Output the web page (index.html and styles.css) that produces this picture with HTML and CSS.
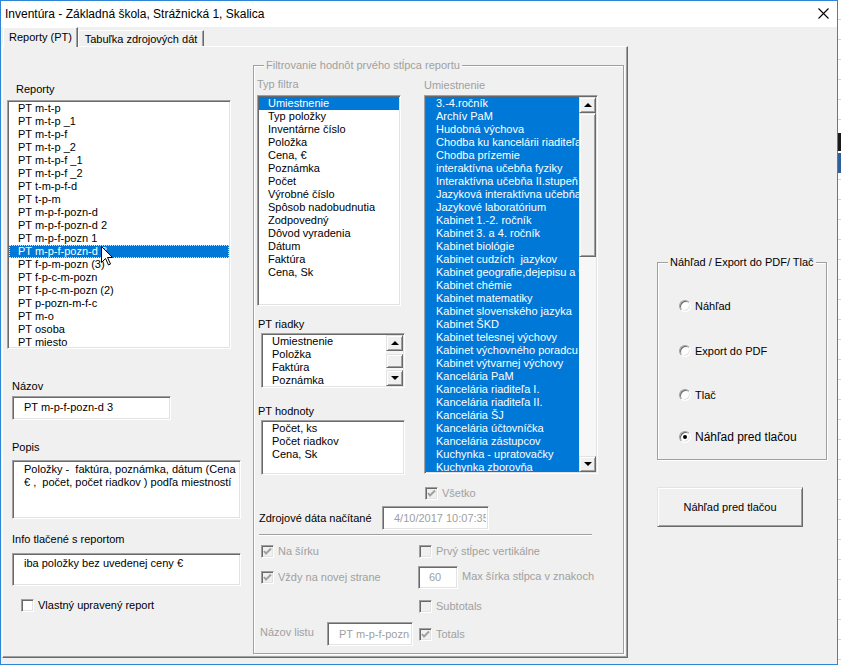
FILE: index.html
```html
<!DOCTYPE html>
<html>
<head>
<meta charset="utf-8">
<title>Inventúra</title>
<link rel="stylesheet" href="styles.css">
</head>
<body>
<div class="desk">
  <div class="window">
    <div class="titlebar">
      <span class="title">Inventúra - Základná škola, Strážnická 1, Skalica</span>
      <svg class="close" width="11" height="11" viewBox="0 0 11 11"><path d="M0.5 0.5 L10.5 10.5 M10.5 0.5 L0.5 10.5" stroke="#000" stroke-width="1.1" fill="none"/></svg>
    </div>
    <div class="tabs">
      <div class="tab tab-active">Reporty (PT)</div>
      <div class="tab tab-inactive">Tabuľka zdrojových dát</div>
    </div>
    <div class="main">
      <div class="tabpage">
        <div class="leftcol">
          <div class="lbl lbl-reporty">Reporty</div>
          <div class="lb lb-reporty">
            <div class="items">
              <div class="it">PT m-t-p</div>
              <div class="it">PT m-t-p _1</div>
              <div class="it">PT m-t-p-f</div>
              <div class="it">PT m-t-p _2</div>
              <div class="it">PT m-t-p-f _1</div>
              <div class="it">PT m-t-p-f _2</div>
              <div class="it">PT t-m-p-f-d</div>
              <div class="it">PT t-p-m</div>
              <div class="it">PT m-p-f-pozn-d</div>
              <div class="it">PT m-p-f-pozn-d 2</div>
              <div class="it">PT m-p-f-pozn 1</div>
              <div class="it sel focus">PT m-p-f-pozn-d 3</div>
              <div class="it">PT f-p-m-pozn (3)</div>
              <div class="it">PT f-p-c-m-pozn</div>
              <div class="it">PT f-p-c-m-pozn (2)</div>
              <div class="it">PT p-pozn-m-f-c</div>
              <div class="it">PT m-o</div>
              <div class="it">PT osoba</div>
              <div class="it">PT miesto</div>
            </div>
            <svg class="cursor" width="13" height="20" viewBox="0 0 13 20"><path d="M0.5 0.5 L0.5 16.5 L4.5 12.5 L7.5 19 L9.5 18 L6.5 11.5 L11.5 11.5 Z" fill="#fff" stroke="#000" stroke-width="1"/></svg>
          </div>
          <div class="lbl lbl-nazov">Názov</div>
          <div class="tb tb-nazov">PT m-p-f-pozn-d 3</div>
          <div class="lbl lbl-popis">Popis</div>
          <div class="tb tb-popis">Položky -  faktúra, poznámka, dátum (Cena
€ ,  počet, počet riadkov ) podľa miestností</div>
          <div class="lbl lbl-info">Info tlačené s reportom</div>
          <div class="tb tb-info">iba položky bez uvedenej ceny €</div>
          <div class="chkrow chk-vlastny"><span class="chk"></span><span>Vlastný upravený report</span></div>
        </div>

        <div class="frame filter">
          <div class="legend dis">Filtrovanie hodnôt prvého stĺpca reportu</div>
          <div class="filter-top">
            <div class="colA">
              <div class="lbl dis lbl-typ">Typ filtra</div>
              <div class="lb lb-typ">
                <div class="items">
                  <div class="it sel">Umiestnenie</div>
                  <div class="it">Typ položky</div>
                  <div class="it">Inventárne číslo</div>
                  <div class="it">Položka</div>
                  <div class="it">Cena, €</div>
                  <div class="it">Poznámka</div>
                  <div class="it">Počet</div>
                  <div class="it">Výrobné číslo</div>
                  <div class="it">Spôsob nadobudnutia</div>
                  <div class="it">Zodpovedný</div>
                  <div class="it">Dôvod vyradenia</div>
                  <div class="it">Dátum</div>
                  <div class="it">Faktúra</div>
                  <div class="it">Cena, Sk</div>
                </div>
              </div>
              <div class="lbl lbl-riadky">PT riadky</div>
              <div class="lb lb-small">
                <div class="items items-row">
                  <div class="items-text">
                    <div class="it">Umiestnenie</div>
                    <div class="it">Položka</div>
                    <div class="it">Faktúra</div>
                    <div class="it">Poznámka</div>
                  </div>
                  <div class="sb">
                    <div class="sb-btn raised"><span class="arr-up"></span></div>
                    <div class="sb-thumb raised thumb-small"></div>
                    <div class="sb-track"></div>
                    <div class="sb-btn raised"><span class="arr-down"></span></div>
                  </div>
                </div>
              </div>
              <div class="lbl lbl-hodnoty">PT hodnoty</div>
              <div class="lb lb-small">
                <div class="items">
                  <div class="it">Počet, ks</div>
                  <div class="it">Počet riadkov</div>
                  <div class="it">Cena, Sk</div>
                </div>
              </div>
            </div>
            <div class="colB">
              <div class="lbl dis lbl-umi">Umiestnenie</div>
              <div class="lb lb-umi">
                <div class="items items-row">
                  <div class="items-text blue">
                    <div class="it">3.-4.ročník</div>
                    <div class="it">Archív PaM</div>
                    <div class="it">Hudobná výchova</div>
                    <div class="it">Chodba ku kancelárii riaditeľa</div>
                    <div class="it">Chodba prízemie</div>
                    <div class="it">interaktívna učebňa fyziky</div>
                    <div class="it">Interaktívna učebňa II.stupeň</div>
                    <div class="it">Jazyková interaktívna učebňa</div>
                    <div class="it">Jazykové laboratórium</div>
                    <div class="it">Kabinet 1.-2. ročník</div>
                    <div class="it">Kabinet 3. a 4. ročník</div>
                    <div class="it">Kabinet biológie</div>
                    <div class="it">Kabinet cudzích  jazykov</div>
                    <div class="it">Kabinet geografie,dejepisu a výchovy</div>
                    <div class="it">Kabinet chémie</div>
                    <div class="it">Kabinet matematiky</div>
                    <div class="it">Kabinet slovenského jazyka</div>
                    <div class="it">Kabinet ŠKD</div>
                    <div class="it">Kabinet telesnej výchovy</div>
                    <div class="it">Kabinet výchovného poradcu</div>
                    <div class="it">Kabinet výtvarnej výchovy</div>
                    <div class="it">Kancelária PaM</div>
                    <div class="it">Kancelária riaditeľa I.</div>
                    <div class="it">Kancelária riaditeľa II.</div>
                    <div class="it">Kancelária ŠJ</div>
                    <div class="it">Kancelária účtovníčka</div>
                    <div class="it">Kancelária zástupcov</div>
                    <div class="it">Kuchynka - upratovačky</div>
                    <div class="it">Kuchynka zborovňa</div>
                  </div>
                  <div class="sb sb-tall">
                    <div class="sb-btn raised"><span class="arr-up"></span></div>
                    <div class="sb-thumb raised thumb-big"></div>
                    <div class="sb-track"></div>
                    <div class="sb-btn raised"><span class="arr-down"></span></div>
                  </div>
                </div>
              </div>
              <div class="chkrow dis chk-vsetko"><span class="chk chk-dis"><svg width="11" height="11" viewBox="0 0 11 11"><path d="M2 5 L4 7.5 L9 2.5" stroke="#a0a0a0" stroke-width="2" fill="none"/></svg></span><span>Všetko</span></div>
            </div>
          </div>

          <div class="zdroj-row">
            <span class="zdroj-lbl">Zdrojové dáta načítané</span>
            <div class="tb tb-zdroj dis"><span class="clip clip-zdroj">4/10/2017 10:07:35</span></div>
          </div>
          <div class="sep"></div>
          <div class="opts">
            <div class="chkrow dis"><span class="chk chk-dis"><svg width="11" height="11" viewBox="0 0 11 11"><path d="M2 5 L4 7.5 L9 2.5" stroke="#a0a0a0" stroke-width="2" fill="none"/></svg></span><span>Na šírku</span></div>
            <div class="chkrow dis"><span class="chk chk-dis"></span><span>Prvý stĺpec vertikálne</span></div>
            <div class="chkrow dis"><span class="chk chk-dis"><svg width="11" height="11" viewBox="0 0 11 11"><path d="M2 5 L4 7.5 L9 2.5" stroke="#a0a0a0" stroke-width="2" fill="none"/></svg></span><span>Vždy na novej strane</span></div>
            <div class="maxrow dis"><div class="tb tb-60">60</div><span class="max-lbl">Max šírka stĺpca v znakoch</span></div>
            <div class="empty"></div>
            <div class="chkrow dis"><span class="chk chk-dis"></span><span>Subtotals</span></div>
            <div class="listrow dis"><span class="listlbl">Názov listu</span><div class="tb tb-list"><span class="clip clip-list">PT m-p-f-pozn-d 3</span></div></div>
            <div class="chkrow dis"><span class="chk chk-dis"><svg width="11" height="11" viewBox="0 0 11 11"><path d="M2 5 L4 7.5 L9 2.5" stroke="#a0a0a0" stroke-width="2" fill="none"/></svg></span><span>Totals</span></div>
          </div>
        </div>
      </div>

      <div class="rightcol">
        <div class="frame output">
          <div class="legend">Náhľad / Export do PDF/ Tlač</div>
          <div class="radrow r1"><span class="rad"></span><span>Náhľad</span></div>
          <div class="radrow r2"><span class="rad"></span><span>Export do PDF</span></div>
          <div class="radrow r3"><span class="rad"></span><span>Tlač</span></div>
          <div class="radrow r4 big"><span class="rad on"><span class="dot"></span></span><span>Náhľad pred tlačou</span></div>
        </div>
        <div class="btn raised">Náhľad pred tlačou</div>
      </div>
    </div>
  </div>
  <div class="excel">
    <div class="xl-dark"></div>
    <div class="xl-blue"></div>
  </div>
</div>
</body>
</html>
```

FILE: styles.css
```css
* { box-sizing: border-box; }
html, body { margin: 0; padding: 0; }
body {
  width: 841px;
  height: 668px;
  overflow: hidden;
  background: #fff;
  font-family: "Liberation Sans", Arial, sans-serif;
  font-size: 11px;
  color: #000;
}
.desk { display: flex; height: 668px; }
.window {
  flex: none;
  width: 838px;
  height: 665px;
  border: 1px solid #2f86d6;
  background: #f0f0f0;
  display: flex;
  flex-direction: column;
}
.excel {
  flex: 1;
  background: repeating-linear-gradient(#fff 0 19px, #d6d6d6 19px 20px);
  padding-top: 133px;
}
.xl-dark { height: 18px; background: #1a1a1a; }
.xl-blue { height: 20px; background: #2f5f9a; margin-top: 2px; }

.titlebar {
  height: 26px;
  background: #fff;
  display: flex;
  align-items: center;
  justify-content: space-between;
  padding: 0 8px 1px 4px;
  font-size: 12px;
  flex: none;
}
.tabs {
  height: 20px;
  display: flex;
  align-items: flex-end;
  padding-left: 2px;
  flex: none;
  font-size: 11px;
}
.tab {
  border-left: 1px solid #fff;
  border-top: 1px solid #fff;
  border-right: 1px solid #696969;
  box-shadow: inset -1px 0 0 #a0a0a0;
  background: #f0f0f0;
  text-align: center;
  white-space: nowrap;
}
.tab-active {
  width: 75px;
  height: 20px;
  line-height: 18px;
  position: relative;
  z-index: 1;
}
.tab-inactive {
  width: 126px;
  height: 17px;
  line-height: 16px;
}
.main {
  display: flex;
  align-items: flex-start;
  padding-left: 1px;
  margin-top: -1px;
}
.tabpage {
  flex: none;
  width: 626px;
  height: 612px;
  border-top: 1px solid #fff;
  border-left: 1px solid #fff;
  border-right: 1px solid #696969;
  border-bottom: 1px solid #696969;
  box-shadow: inset -1px -1px 0 #a0a0a0;
  display: flex;
  align-items: flex-start;
}

.lbl { line-height: 13px; height: 13px; white-space: nowrap; }
.dis { color: #a0a0a0; }

/* sunken boxes */
.lb, .tb {
  background: #fff;
  border: 1px solid;
  border-color: #a0a0a0 #fff #fff #a0a0a0;
  box-shadow: inset 1px 1px 0 #696969, inset -1px -1px 0 #e3e3e3;
}
.lb { position: relative; overflow: hidden; }
.items { margin: 1px; overflow: hidden; height: calc(100% - 2px); }
.it { height: 13px; line-height: 13px; padding-left: 9px; white-space: pre; overflow: hidden; }
.it.sel { background: #0078d7; color: #fff; }
.it.focus { outline: 1px dotted #f3e4b5; outline-offset: -1px; }
.items-row { display: flex; }
.items-text { flex: 1; min-width: 0; overflow: hidden; }
.items-text.blue { background: #0078d7; color: #fff; }
.items-text.blue .it { padding-left: 10px; }

/* scrollbars */
.sb { width: 17px; flex: none; display: flex; flex-direction: column; background: #f4f4f4; }
.sb-btn { height: 16px; flex: none; display: flex; align-items: center; justify-content: center; }
.sb-track { flex: 1; background: #f7f7f7; }
.thumb-small { height: 14px; flex: none; margin-top: 3px; }
.thumb-big { height: 144px; flex: none; }
.raised {
  background: #f0f0f0;
  border: 1px solid;
  border-color: #e3e3e3 #696969 #696969 #e3e3e3;
  box-shadow: inset 1px 1px 0 #fff, inset -1px -1px 0 #a0a0a0;
}
.arr-up, .arr-down { width: 0; height: 0; border-left: 4px solid transparent; border-right: 4px solid transparent; }
.arr-up { border-bottom: 4px solid #000; }
.arr-down { border-top: 4px solid #000; }

/* left column */
.leftcol { flex: none; width: 234px; margin-left: 4px; display: flex; flex-direction: column; }
.lbl-reporty { margin-top: 36px; margin-left: 9px; }
.lb-reporty { margin-top: 4px; width: 224px; height: 249px; }
.cursor { position: absolute; left: 93px; top: 145px; }
.lbl-nazov { margin-top: 31px; margin-left: 5px; }
.tb { white-space: pre; overflow: hidden; }
.clip { display: block; overflow: hidden; white-space: nowrap; }
.clip-zdroj { width: 92px; }
.clip-list { width: 71px; }
.tb-nazov { margin-top: 3px; margin-left: 5px; width: 159px; height: 24px; line-height: 21px; padding-left: 11px; }
.lbl-popis { margin-top: 21px; margin-left: 5px; }
.tb-popis { margin-top: 6px; margin-left: 5px; width: 229px; height: 59px; line-height: 13px; padding: 2px 0 0 11px; }
.lbl-info { margin-top: 14px; margin-left: 5px; }
.tb-info { margin-top: 7px; margin-left: 5px; width: 229px; height: 33px; line-height: 13px; padding: 3px 0 0 11px; }
.chkrow { display: flex; align-items: center; height: 13px; line-height: 13px; white-space: nowrap; }
.chk-vlastny { margin-top: 13px; margin-left: 14px; }
.chk {
  flex: none;
  width: 13px;
  height: 13px;
  margin-right: 4px;
  background: #fff;
  border: 1px solid;
  border-color: #a0a0a0 #fff #fff #a0a0a0;
  box-shadow: inset 1px 1px 0 #696969, inset -1px -1px 0 #e3e3e3;
  display: flex;
  align-items: center;
  justify-content: center;
}
.chk-dis { background: #f0f0f0; }

/* frames */
.frame {
  flex: none;
  border: 1px solid #a0a0a0;
  box-shadow: inset 1px 1px 0 #fff, 1px 1px 0 #fff;
}
.legend {
  width: fit-content;
  margin-top: -7px;
  margin-bottom: -6px;
  margin-left: 10px;
  padding: 0 2px;
  background: #f0f0f0;
  line-height: 13px;
  height: 13px;
  white-space: nowrap;
}
.filter { width: 371px; height: 589px; margin-left: 12px; margin-top: 18px; }
.filter-top { display: flex; align-items: flex-start; }
.colA { flex: none; width: 148px; margin-left: 3px; display: flex; flex-direction: column; }
.lbl-typ { margin-top: 12px; }
.lb-typ { margin-top: 4px; width: 144px; height: 211px; }
.lbl-riadky { margin-top: 12px; margin-left: 1px; }
.lb-small { margin-top: 2px; margin-left: 4px; width: 144px; height: 55px; }
.lb-small .it { padding-left: 9px; }
.lbl-hodnoty { margin-top: 17px; margin-left: 1px; }
.colB { flex: none; width: 174px; margin-left: 19px; display: flex; flex-direction: column; }
.lbl-umi { margin-top: 13px; }
.lb-umi { margin-top: 3px; width: 174px; height: 379px; }
.chk-vsetko { margin-top: 13px; margin-left: 1px; }

.zdroj-row { display: flex; align-items: center; margin-top: 6px; margin-left: 5px; }
.zdroj-lbl { width: 123px; flex: none; white-space: nowrap; }
.tb-zdroj { width: 107px; height: 24px; line-height: 22px; padding-left: 11px; }
.sep { margin-top: 4px; margin-left: 5px; width: 333px; border-top: 1px solid #a0a0a0; border-bottom: 1px solid #fff; }
.opts {
  margin-top: 2px;
  margin-left: 7px;
  display: grid;
  grid-template-columns: 158px 1fr;
  grid-template-rows: 26px 26px 32px 24px;
  align-items: center;
}
.maxrow { display: flex; align-items: center; margin-left: -1px; white-space: nowrap; }
.tb-60 { width: 40px; height: 23px; line-height: 21px; padding-left: 10px; }
.max-lbl { margin-left: 4px; margin-top: -3px; }
.listrow { display: flex; align-items: center; margin-left: -1px; }
.listlbl { width: 67px; flex: none; white-space: nowrap; margin-top: -4px; }
.tb-list { width: 86px; height: 24px; line-height: 22px; padding-left: 11px; }

/* right column */
.rightcol { flex: none; margin-left: 29px; display: flex; flex-direction: column; }
.output { width: 170px; height: 198px; margin-top: 216px; }
.radrow { display: flex; align-items: center; height: 13px; margin-left: 21px; white-space: nowrap; }
.r1 { margin-top: 36px; }
.r2 { margin-top: 32px; }
.r3 { margin-top: 31px; }
.r4 { margin-top: 29px; height: 14px; }
.big { font-size: 12px; }
.rad {
  flex: none;
  width: 12px;
  height: 12px;
  margin-right: 4px;
  border-radius: 50%;
  background: #fff;
  border: 1px solid;
  border-color: #a0a0a0 #fff #fff #a0a0a0;
  box-shadow: inset 1px 1px 0 #696969, inset -1px -1px 0 #e3e3e3;
  display: flex;
  align-items: center;
  justify-content: center;
}
.dot { width: 4px; height: 4px; border-radius: 50%; background: #000; }
.btn {
  width: 146px;
  height: 40px;
  margin-top: 27px;
  display: flex;
  align-items: center;
  justify-content: center;
  white-space: nowrap;
}
```
